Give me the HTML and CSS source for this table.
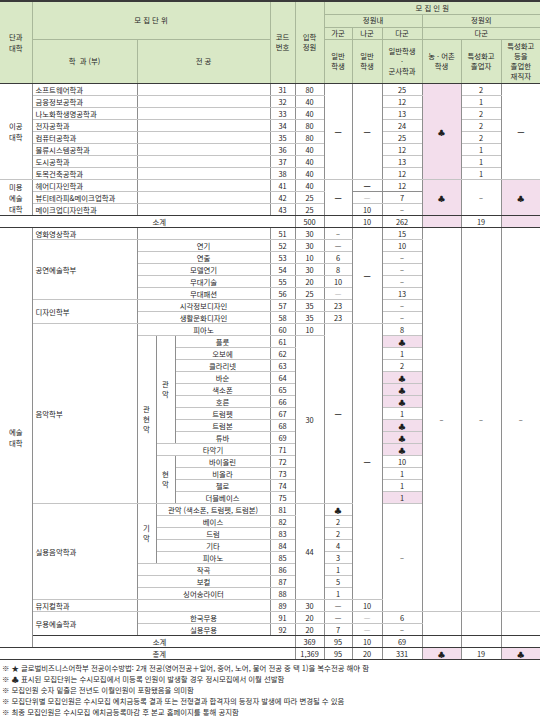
FILE: index.html
```html
<!DOCTYPE html>
<html lang="ko">
<head>
<meta charset="utf-8">
<title>모집단위 및 모집인원</title>
<link rel="stylesheet" href="styles.css">
</head>
<body>
<table class="t">
<colgroup>
<col class="c0"><col class="c1"><col class="c2"><col class="c3"><col class="c4"><col class="c5"><col class="c6"><col class="c7"><col class="c8"><col class="c9"><col class="c10"><col class="c11"><col class="c12">
</colgroup>
<thead>
<tr class="h1">
<th rowspan="4" class="bd first">단과<br>대학</th>
<th colspan="4" rowspan="3">모 집 단 위</th>
<th rowspan="4" class="bd">코드<br>번호</th>
<th rowspan="4" class="bd">입학<br>정원</th>
<th colspan="6" class="last">모 집 인 원</th>
</tr>
<tr class="h2"><th colspan="3">정원내</th><th colspan="3" class="last">정원외</th></tr>
<tr class="h3"><th>가군</th><th>나군</th><th>다군</th><th colspan="3" class="last">다군</th></tr>
<tr class="h4">
<th class="bd">학&nbsp;&nbsp;과 (부)</th>
<th colspan="3" class="bd">전 공</th>
<th class="bd">일반<br>학생</th>
<th class="bd">일반<br>학생</th>
<th class="bd">일반학생<br>·<br>군사학과</th>
<th class="bd">농 · 어촌<br>학생</th>
<th class="bd">특성화고<br>졸업자</th>
<th class="bd last">특성화고<br>등을<br>졸업한<br>재직자</th>
</tr>
</thead>
<tbody>
<tr><td rowspan="8" class="first">이공<br>대학</td><td class="dept">소프트웨어학과</td><td colspan="3"></td><td>31</td><td>80</td><td rowspan="8" class="dash">—</td><td rowspan="8" class="dash">—</td><td>25</td><td rowspan="8" class="pk">♣</td><td>2</td><td rowspan="8" class="dash last">—</td></tr>
<tr><td class="dept">금융정보공학과</td><td colspan="3"></td><td>32</td><td>40</td><td>12</td><td>1</td></tr>
<tr><td class="dept">나노화학생명공학과</td><td colspan="3"></td><td>33</td><td>40</td><td>13</td><td>2</td></tr>
<tr><td class="dept">전자공학과</td><td colspan="3"></td><td>34</td><td>80</td><td>24</td><td>2</td></tr>
<tr><td class="dept">컴퓨터공학과</td><td colspan="3"></td><td>35</td><td>80</td><td>25</td><td>2</td></tr>
<tr><td class="dept">물류시스템공학과</td><td colspan="3"></td><td>36</td><td>40</td><td>12</td><td>1</td></tr>
<tr><td class="dept">도시공학과</td><td colspan="3"></td><td>37</td><td>40</td><td>13</td><td>1</td></tr>
<tr><td class="dept">토목건축공학과</td><td colspan="3"></td><td>38</td><td>40</td><td>12</td><td>1</td></tr>

<tr><td rowspan="3" class="first bd">미용<br>예술<br>대학</td><td class="dept">헤어디자인학과</td><td colspan="3"></td><td>41</td><td>40</td><td rowspan="3" class="dash bd">—</td><td class="dash md">—</td><td class="md">12</td><td rowspan="3" class="pk bd">♣</td><td rowspan="3" class="bd">–</td><td rowspan="3" class="pk bd last">♣</td></tr>
<tr><td class="dept">뷰티테라피&amp;메이크업학과</td><td colspan="3"></td><td>42</td><td>25</td><td class="lt">—</td><td>7</td></tr>
<tr><td class="dept bd">메이크업디자인학과</td><td colspan="3" class="bd"></td><td class="bd">43</td><td class="bd">25</td><td class="bd">10</td><td class="bd">–</td></tr>

<tr class="sub"><td class="first bd nor"></td><td colspan="5" class="bd sublabel">소계</td><td class="bd">500</td><td class="bd"></td><td class="bd">10</td><td class="bd">262</td><td class="pk bd"></td><td class="bd">19</td><td class="pk bd last"></td></tr>

<tr><td rowspan="35" class="first bd">예술<br>대학</td><td class="dept">영화영상학과</td><td colspan="3"></td><td>51</td><td>30</td><td>–</td><td rowspan="8" class="dash">—</td><td>15</td><td rowspan="32">–</td><td rowspan="32">–</td><td rowspan="32" class="last">–</td></tr>
<tr><td rowspan="5" class="dept">공연예술학부</td><td colspan="3">연기</td><td>52</td><td>30</td><td>—</td><td>10</td></tr>
<tr><td colspan="3">연출</td><td>53</td><td>10</td><td>6</td><td>–</td></tr>
<tr><td colspan="3">모델연기</td><td>54</td><td>30</td><td>8</td><td>–</td></tr>
<tr><td colspan="3">무대기술</td><td>55</td><td>20</td><td>10</td><td>–</td></tr>
<tr><td colspan="3">무대패션</td><td>56</td><td>25</td><td class="lt">—</td><td>13</td></tr>
<tr><td rowspan="2" class="dept">디자인학부</td><td colspan="3">시각정보디자인</td><td>57</td><td>35</td><td>23</td><td>–</td></tr>
<tr><td colspan="3">생활문화디자인</td><td>58</td><td>35</td><td>23</td><td>–</td></tr>

<tr><td rowspan="15" class="dept">음악학부</td><td colspan="3">피아노</td><td>60</td><td>10</td><td rowspan="15" class="dash">—</td><td rowspan="23" class="dash">—</td><td>8</td></tr>
<tr><td rowspan="14" class="vt">관<br>현<br>악</td><td rowspan="9" class="vt">관<br>악</td><td>플룻</td><td>61</td><td rowspan="14">30</td><td class="pk">♣</td></tr>
<tr><td>오보에</td><td>62</td><td>1</td></tr>
<tr><td>클라리넷</td><td>63</td><td>2</td></tr>
<tr><td>바순</td><td>64</td><td class="pk">♣</td></tr>
<tr><td>색소폰</td><td>65</td><td class="pk">♣</td></tr>
<tr><td>호른</td><td>66</td><td class="pk">♣</td></tr>
<tr><td>트럼펫</td><td>67</td><td>1</td></tr>
<tr><td>트럼본</td><td>68</td><td class="pk">♣</td></tr>
<tr><td>튜바</td><td>69</td><td class="pk">♣</td></tr>
<tr><td colspan="2">타악기</td><td>71</td><td class="pk">♣</td></tr>
<tr><td rowspan="4" class="vt">현<br>악</td><td>바이올린</td><td>72</td><td>10</td></tr>
<tr><td>비올라</td><td>73</td><td>1</td></tr>
<tr><td>첼로</td><td>74</td><td>1</td></tr>
<tr><td>더블베이스</td><td>75</td><td class="pk">1</td></tr>

<tr><td rowspan="8" class="dept">실용음악학과</td><td rowspan="5" class="vt">기<br>악</td><td colspan="2">관악 (색소폰, 트럼펫, 트럼본)</td><td>81</td><td rowspan="8">44</td><td>♣</td><td rowspan="9">–</td></tr>
<tr><td colspan="2">베이스</td><td>82</td><td>2</td></tr>
<tr><td colspan="2">드럼</td><td>83</td><td>2</td></tr>
<tr><td colspan="2">기타</td><td>84</td><td>4</td></tr>
<tr><td colspan="2">피아노</td><td>85</td><td>3</td></tr>
<tr><td colspan="3">작곡</td><td>86</td><td>1</td></tr>
<tr><td colspan="3">보컬</td><td>87</td><td>5</td></tr>
<tr><td colspan="3">싱어송라이터</td><td>88</td><td>1</td></tr>
<tr><td class="dept">뮤지컬학과</td><td colspan="3"></td><td>89</td><td>30</td><td>—</td><td>10</td></tr>
<tr><td rowspan="2" class="dept bd">무용예술학과</td><td colspan="3">한국무용</td><td>91</td><td>20</td><td>—</td><td class="lt">—</td><td>6</td><td rowspan="2" class="bd"></td><td rowspan="2" class="bd"></td><td rowspan="2" class="bd last"></td></tr>
<tr><td colspan="3" class="bd">실용무용</td><td class="bd">92</td><td class="bd">20</td><td class="bd">7</td><td class="lt bd">—</td><td class="bd">–</td></tr>

<tr class="sub"><td colspan="5" class="bd sublabel">소계</td><td class="bd">369</td><td class="bd">95</td><td class="bd">10</td><td class="bd">69</td><td class="bd"></td><td class="bd"></td><td class="bd last"></td></tr>
<tr class="sub"><td class="first bd nor"></td><td colspan="5" class="bd sublabel">총계</td><td class="bd">1,369</td><td class="bd">95</td><td class="bd">20</td><td class="bd">331</td><td class="pk bd">♣</td><td class="bd">19</td><td class="pk bd last">♣</td></tr>
</tbody>
</table>
<div class="notes">
<p>※ ★ 글로벌비즈니스어학부 전공이수방법: 2개 전공(영어전공＋일어, 중어, 노어, 불어 전공 중 택 1)을 복수전공 해야 함</p>
<p>※ ♣ 표시된 모집단위는 수시모집에서 미등록 인원이 발생할 경우 정시모집에서 이월 선발함</p>
<p>※ 모집인원 숫자 밑줄은 전년도 이월인원이 포함됐음을 의미함</p>
<p>※ 모집단위별 모집인원은 수시모집 예치금등록 결과 또는 전형결과 합격자의 등정자 발생에 따라 변경될 수 있음</p>
<p>※ 최종 모집인원은 수시모집 예치금등록마감 후 본교 홈페이지를 통해 공지함</p>
</div>
</body>
</html>
```
FILE: styles.css
```css
body {
  margin: 0;
  background: #ffffff;
  color: #1e1e1e;
  font-family: "Noto Sans CJK KR", "Noto Sans", sans-serif;
  font-size: 7.4px;
}

.t {
  width: 540px;
  border-collapse: collapse;
  table-layout: fixed;
  border-top: 2px solid #3a3a3a;
}

.c0 { width: 32px; }
.c1 { width: 105px; }
.c2 { width: 19px; }
.c3 { width: 19px; }
.c4 { width: 95px; }
.c5 { width: 25px; }
.c6 { width: 29px; }
.c7 { width: 28px; }
.c8 { width: 30px; }
.c9 { width: 40px; }
.c10 { width: 39px; }
.c11 { width: 40px; }
.c12 { width: 39px; }

th, td {
  padding: 0;
  text-align: center;
  vertical-align: middle;
  white-space: nowrap;
  overflow: hidden;
  font-weight: normal;
  line-height: 9px;
  border-top: 1px solid #c4c4c4;
  border-bottom: 1px solid #c4c4c4;
  border-left: 1px solid #8e8e8e;
  border-right: 1px solid #8e8e8e;
}

th {
  background: #d9e8c6;
  border-color: #a9b89a;
  color: #262626;
  line-height: 10.5px;
}

.h1 { height: 13px; }
.h2 { height: 13px; }
.h3 { height: 12px; }
.h4 { height: 44px; }
.h4 th { line-height: 10px; }

tbody tr { height: 12px; }

.first { border-left: none; line-height: 11px; }
.last { border-right: none; }

.bd { border-bottom: 1px solid #3a3a3a; }
.md { border-bottom-color: #8e8e8e; }

.dept {
  text-align: left;
  padding-left: 3px;
}

.vt { line-height: 10px; }

.pk { background: #f3deec; }

.lt { color: #a8a8a8; }

.dash { font-size: 8px; font-weight: bold; }

.nor { border-right: none; }
.sublabel { border-left: none; padding-right: 8px; }

.notes {
  padding: 2px 0 0 2px;
}

.notes p {
  margin: 0;
  line-height: 11.2px;
  white-space: nowrap;
  color: #2a2a2a;
}
```
